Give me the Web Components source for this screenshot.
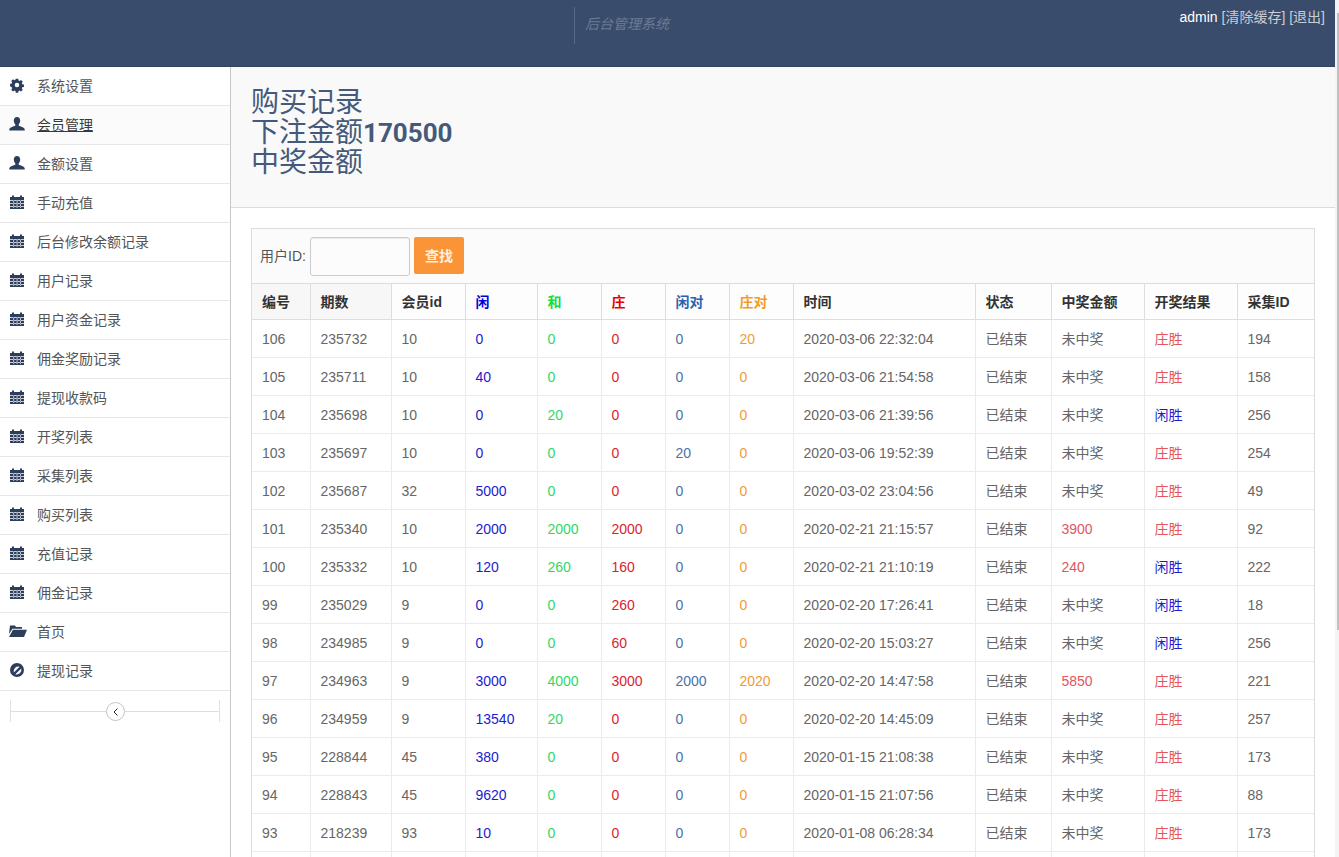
<!DOCTYPE html>
<html lang="zh">
<head>
<meta charset="utf-8">
<title>后台管理系统</title>
<style>
html, body { margin: 0; padding: 0; height: 857px; overflow: hidden; background: #fff; }
body { font: 14px "Liberation Sans", "Noto Sans CJK SC", sans-serif; }
</style>
</head>
<body>
<admin-app></admin-app>

<template id="navbar-tpl">
<style>
:host { display: flex; height: 67px; background: #3a4c6b; color: #fff; box-sizing: border-box; position: relative; box-shadow: inset 0 -1px 0 #34445f; }
.brand { margin-left: 574px; margin-top: 7px; height: 37px; border-left: 1px solid #566a88; padding-left: 10px; font-style: italic; color: #6a7b96; line-height: 34px; font-size: 14px; }
.user { margin-left: auto; margin-right: 14px; padding-top: 9px; font-size: 14px; line-height: 17px; }
.user span { color: #c9ced6; }
</style>
<div class="brand">后台管理系统</div>
<div class="user">admin <span>[清除缓存]</span> <span>[退出]</span></div>
</template>

<template id="nav-item-tpl">
<style>
:host { display: flex; align-items: center; height: 36px; padding-bottom: 2px; border-bottom: 1px solid #e7e7e7; color: #555; font-size: 14px; }
:host([active]) { background: #fbfbfb; }
:host([active]) .label { text-decoration: underline; color: #393939; }
.icon { width: 16px; height: 16px; margin-left: 9px; margin-right: 12px; flex: none; fill: #2c3e5c; fill-rule: evenodd; overflow: visible; }
</style>
<svg class="icon" viewBox="0 0 16 16"><path id="glyph"/></svg>
<span class="label"><slot></slot></span>
</template>

<template id="sidebar-tpl">
<style>
:host { display: block; width: 231px; box-sizing: border-box; border-right: 1px solid #c8c8c8; background: #fff; flex: none; }
.collapse { display: flex; align-items: center; margin: 9px 10px 0; height: 22px; border: solid #e0e0e0; border-width: 0 1px; position: relative; }
.collapse::before { content: ""; flex: 1; border-top: 1px solid #dedede; }
.btn { position: absolute; left: 95px; top: 2px; width: 19px; height: 19px; box-sizing: border-box; border: 1px solid #c4c4c4; border-radius: 50%; background: #fff; display: flex; align-items: center; justify-content: center; }
.btn svg { width: 8px; height: 8px; }
</style>
<slot></slot>
<div class="collapse"><div class="btn"><svg viewBox="0 0 8 8"><path d="M5.500 .5 L2 4 L5.500 7.500" fill="none" stroke="#222" stroke-width="1"/></svg></div></div>
</template>

<template id="page-header-tpl">
<style>
:host { display: block; height: 141px; box-sizing: border-box; padding: 21px 20px 0; border-bottom: 1px solid #dcdcdc; color: #46597a; font-size: 28px; line-height: 30px; background-color: #f9f9f9; }
b { font: 700 26px/30px Roboto, "Liberation Sans", sans-serif; }
</style>
<div>购买记录</div>
<div>下注金额<b>170500</b></div>
<div>中奖金额</div>
</template>

<template id="search-bar-tpl">
<style>
:host { display: flex; align-items: center; height: 55px; box-sizing: border-box; padding: 0 8px; background: #fbfbfb; border-bottom: 1px solid #ddd; color: #555; font-size: 14px; }
.label { position: relative; top: -1px; }
.input { width: 100px; height: 39px; box-sizing: border-box; margin-left: 4px; border: 1px solid #ccc; border-radius: 3px; background: #fcfcfc; box-shadow: inset 0 1px 1px rgba(0,0,0,.075); }
.btn { margin-left: 4px; width: 50px; height: 37px; background: #fb9337; color: #fdf0e2; font-weight: 700; border-radius: 2px; display: flex; align-items: center; justify-content: center; position: relative; top: -1px; }
</style>
<span class="label">用户ID:</span><div class="input"></div><div class="btn">查找</div>
</template>

<template id="record-table-tpl">
<style>
:host { display: block; }
table { width: 100%; border-collapse: collapse; table-layout: fixed; font-size: 14px; color: #666; }
th, td { border-right: 1px solid #ebebeb; border-bottom: 1px solid #ebebeb; padding: 0 10px; height: 37px; text-align: left; white-space: nowrap; overflow: hidden; }
th { padding-bottom: 2px; box-sizing: content-box; font-weight: 700; color: #333; background: #fdfdfd; border-right-color: #ddd; border-bottom-color: #ddd; }
thead th { height: 33px; }
th:nth-child(1), th:nth-child(2) { background: #f7f7f7; }
td.cjk { padding-bottom: 2px; height: 35px; }
th:last-child, td:last-child { border-right: 0; }
.x { color: #1c1cd0; } .h { color: #2fd866; } .z { color: #dc1c30; } .xd { color: #4a72a8; } .zd { color: #f09a3a; }
th.x { color: #0000e0; } th.h { color: #11dd44; } th.z { color: #e60000; } th.xd { color: #2a62b0; } th.zd { color: #f59a23; }
.win { color: #e4555f; }
</style>
<table>
<colgroup>
<col style="width:58px"><col style="width:81px"><col style="width:74px"><col style="width:72px"><col style="width:64px"><col style="width:64px"><col style="width:64px"><col style="width:64px"><col style="width:182px"><col style="width:76px"><col style="width:93px"><col style="width:93px"><col>
</colgroup>
<thead><tr>
<th>编号</th><th>期数</th><th>会员id</th><th class="x">闲</th><th class="h">和</th><th class="z">庄</th><th class="xd">闲对</th><th class="zd">庄对</th><th>时间</th><th>状态</th><th>中奖金额</th><th>开奖结果</th><th>采集ID</th>
</tr></thead>
<tbody id="rows"></tbody>
</table>
</template>

<template id="app-tpl">
<style>
:host { display: block; height: 857px; overflow: hidden; position: relative; }
.body { display: flex; height: 790px; }
.main { flex: none; width: 1104px; }
.content { padding: 20px 20px 0; }
.box { border: 1px solid #ddd; border-bottom: 0; }
.track { position: absolute; right: 0; top: 0; width: 4px; height: 857px; background: #f4f4f4; }
.thumb { position: absolute; right: 0; top: 13px; width: 2px; height: 617px; background: #c1c1c1; }
</style>
<admin-navbar></admin-navbar>
<div class="body">
  <admin-sidebar id="side"></admin-sidebar>
  <div class="main">
    <page-header></page-header>
    <div class="content"><div class="box"><search-bar></search-bar><record-table></record-table></div></div>
  </div>
</div>
<div class="track"><div class="thumb"></div></div>
</template>

<script>
const ICONS = {
  cog: 'M6.600 1h2.800l.3 1.900 1.200.5 1.600-1.100 2 2-1.100 1.600.5 1.200 1.900.3v2.800l-1.900.3-.5 1.200 1.100 1.600-2 2-1.600-1.100-1.200.5-.3 1.900H6.600l-.3-1.900-1.200-.5-1.600 1.100-2-2 1.100-1.600-.5-1.200L.2 9.400V6.600l1.900-.3.5-1.200-1.100-1.600 2-2 1.600 1.100 1.200-.5zM8 5.400a2.600 2.600 0 1 0 0 5.200 2.600 2.600 0 0 0 0-5.200z',
  user: 'M8 1c2 0 3.200 1.500 3.200 3.600 0 1.500-.6 3-1.500 3.900v1.200c1.900.6 5 1.400 6 3.300v1.500H.3V13c1-1.900 4.100-2.700 6-3.300V8.500C5.400 7.600 4.800 6.100 4.800 4.600 4.800 2.500 6 1 8 1z',
  cal: 'M1 3h14v12H1z M3 1.500h2V3H3z M11 1.500h2V3h-2z M1 6h14v.8H1z M1 9h14v.8H1z M1 12h14v.8H1z M4.400 6h.7v8h-.7z M7.700 6h.7v8h-.7z M11 6h.7v8H11z',
  folder: 'M1 2.500h5l1 1.500h6v1.800H3.500L0 11zM4 6.800h14L15 14H0z',
  ban: 'M8 1a7 7 0 1 1 0 14A7 7 0 0 1 8 1zm-3.200 9.600l5.800-5.800A4.700 4.700 0 0 0 4.800 10.600zm1.600 1.600a4.700 4.700 0 0 0 5.800-5.800z'
};
// the cog reads smaller than the others in the reference
const VIEWBOX = { cog: '-1 -1 18 18' };
const NAV = [
  ['cog', '系统设置'], ['user', '会员管理', true], ['user', '金额设置'], ['cal', '手动充值'], ['cal', '后台修改余额记录'],
  ['cal', '用户记录'], ['cal', '用户资金记录'], ['cal', '佣金奖励记录'], ['cal', '提现收款码'], ['cal', '开奖列表'],
  ['cal', '采集列表'], ['cal', '购买列表'], ['cal', '充值记录'], ['cal', '佣金记录'], ['folder', '首页'], ['ban', '提现记录']
];
const ROWS = [
  [106,235732,10,0,0,0,0,20,'2020-03-06 22:32:04','未中奖','庄胜',194],
  [105,235711,10,40,0,0,0,0,'2020-03-06 21:54:58','未中奖','庄胜',158],
  [104,235698,10,0,20,0,0,0,'2020-03-06 21:39:56','未中奖','闲胜',256],
  [103,235697,10,0,0,0,20,0,'2020-03-06 19:52:39','未中奖','庄胜',254],
  [102,235687,32,5000,0,0,0,0,'2020-03-02 23:04:56','未中奖','庄胜',49],
  [101,235340,10,2000,2000,2000,0,0,'2020-02-21 21:15:57','3900','庄胜',92],
  [100,235332,10,120,260,160,0,0,'2020-02-21 21:10:19','240','闲胜',222],
  [99,235029,9,0,0,260,0,0,'2020-02-20 17:26:41','未中奖','闲胜',18],
  [98,234985,9,0,0,60,0,0,'2020-02-20 15:03:27','未中奖','闲胜',256],
  [97,234963,9,3000,4000,3000,2000,2020,'2020-02-20 14:47:58','5850','庄胜',221],
  [96,234959,9,13540,20,0,0,0,'2020-02-20 14:45:09','未中奖','庄胜',257],
  [95,228844,45,380,0,0,0,0,'2020-01-15 21:08:38','未中奖','庄胜',173],
  [94,228843,45,9620,0,0,0,0,'2020-01-15 21:07:56','未中奖','庄胜',88],
  [93,218239,93,10,0,0,0,0,'2020-01-08 06:28:34','未中奖','庄胜',173],
  ['','','','','','','','','','','','']
];

function tplElement(name, tplId, setup) {
  customElements.define(name, class extends HTMLElement {
    constructor() {
      super();
      this.attachShadow({mode: 'open'});
      this.shadowRoot.appendChild(document.getElementById(tplId).content.cloneNode(true));
    }
    connectedCallback() {
      if (setup) setup.call(this, this.shadowRoot);
    }
  });
}

tplElement('admin-navbar', 'navbar-tpl');
tplElement('admin-sidebar', 'sidebar-tpl');
tplElement('page-header', 'page-header-tpl');
tplElement('search-bar', 'search-bar-tpl');

tplElement('nav-item', 'nav-item-tpl', function (root) {
  const icon = this.getAttribute('icon');
  root.getElementById('glyph').setAttribute('d', ICONS[icon]);
  if (VIEWBOX[icon]) root.querySelector('svg').setAttribute('viewBox', VIEWBOX[icon]);
});

tplElement('record-table', 'record-table-tpl', function (root) {
  const cols = ['', '', '', 'x', 'h', 'z', 'xd', 'zd', '', 'cjk', '', '', ''];
  const body = root.getElementById('rows');
  ROWS.forEach(r => {
    // 状态 is always the same text, so it isn't kept in the data
    const cells = r[0] === '' ? r.concat('') : [...r.slice(0, 9), '已结束', ...r.slice(9)];
    const tr = document.createElement('tr');
    cells.forEach((v, i) => {
      const td = document.createElement('td');
      td.textContent = v;
      if (cols[i]) td.className = cols[i];
      if (i === 10) td.className = v === '未中奖' ? 'cjk' : 'win';
      if (i === 11) td.className = (v === '庄胜' ? 'win' : 'x') + ' cjk';
      tr.appendChild(td);
    });
    body.appendChild(tr);
  });
});

tplElement('admin-app', 'app-tpl', function (root) {
  const side = root.getElementById('side');
  NAV.forEach(([icon, text, active]) => {
    const item = document.createElement('nav-item');
    item.setAttribute('icon', icon);
    if (active) item.setAttribute('active', '');
    item.textContent = text;
    side.appendChild(item);
  });
});
</script>
</body>
</html>
